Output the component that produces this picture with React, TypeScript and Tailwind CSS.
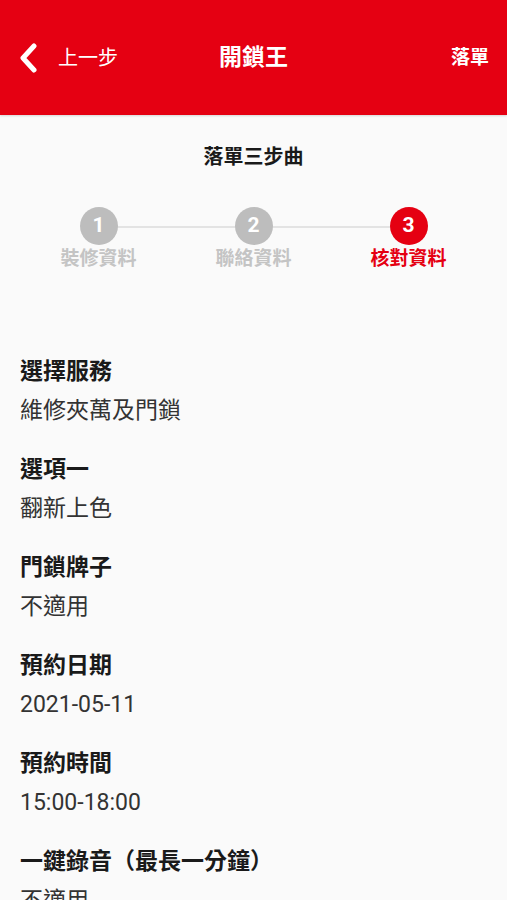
import React from "react"

const font = { fontFamily: "Roboto, 'Noto Sans CJK TC', sans-serif" }

const steps = [
  { n: 1, label: "裝修資料", active: false },
  { n: 2, label: "聯絡資料", active: false },
  { n: 3, label: "核對資料", active: true },
]

const rows = [
  { label: "選擇服務", value: "維修夾萬及門鎖" },
  { label: "選項一", value: "翻新上色" },
  { label: "門鎖牌子", value: "不適用" },
  { label: "預約日期", value: "2021-05-11" },
  { label: "預約時間", value: "15:00-18:00" },
  { label: "一鍵錄音（最長一分鐘）", value: "不適用" },
]

const Header = () => (
  <div className="relative flex h-[115px] items-center bg-[#e50012] px-[18px] text-white shadow-[0_1px_2px_rgba(0,0,0,0.15)]">
    <div className="flex items-center">
      <svg width="20" height="30" viewBox="0 0 20 30" className="mr-[20px]">
        <polyline points="16,3 5,15 16,27" fill="none" stroke="white" strokeWidth="5" strokeLinecap="round" strokeLinejoin="round" />
      </svg>
      <span className="text-[20px] leading-none">上一步</span>
    </div>
    <div className="absolute left-1/2 -translate-x-1/2 text-[23px] font-bold leading-none">開鎖王</div>
    <div className="ml-auto text-[19px] font-bold leading-none">落單</div>
  </div>
)

const Stepper = () => (
  <div className="pt-[28px]">
    <p className="text-center text-[20px] font-bold leading-[28px] text-[#1a1a1a]">落單三步曲</p>
    <div className="relative mt-[36px] grid grid-cols-3 px-[21px]">
      <div className="absolute left-[99px] right-[99px] top-[19px] h-[2px] bg-[#e3e3e3]" />
      {steps.map((s) => (
        <div key={s.n} className="relative flex flex-col items-center">
          <div
            className={
              "flex h-[38px] w-[38px] items-center justify-center rounded-full text-[21px] font-bold text-white " +
              (s.active ? "bg-[#e50012]" : "bg-[#bdbdbd]")
            }
          >
            {s.n}
          </div>
          <span
            className={
              "mt-[1px] text-[19px] font-bold leading-[26px] " + (s.active ? "text-[#e50012]" : "text-[#c4c4c4]")
            }
          >
            {s.label}
          </span>
        </div>
      ))}
    </div>
  </div>
)

const App = () => {
  return (
    <div className="h-[900px] overflow-hidden bg-[#fafafa]" style={font}>
      <Header />
      <Stepper />
      <div className="mt-[85px] px-[20px]">
        {rows.map((r) => (
          <div key={r.label} className="mb-[29px]">
            <p className="text-[23px] font-bold leading-[30px] text-[#1a1a1a]">{r.label}</p>
            <p className="mt-[9px] text-[23px] leading-[30px] text-[#333]">{r.value}</p>
          </div>
        ))}
      </div>
    </div>
  )
}

export default App
